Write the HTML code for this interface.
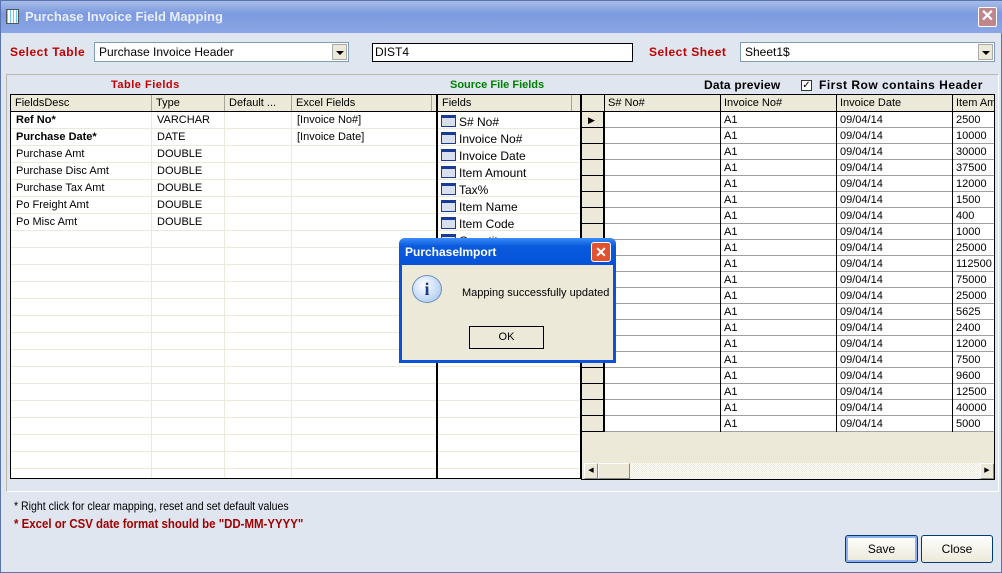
<!DOCTYPE html>
<html><head><meta charset="utf-8">
<style>
*{margin:0;padding:0;box-sizing:border-box}
body{width:1002px;height:573px;overflow:hidden;font-family:"Liberation Sans",Tahoma,sans-serif;font-size:11px;background:#0a246a;position:relative}
.a{position:absolute}
#win{left:0;top:0;width:1002px;height:573px;background:#dfe6ef;border:1px solid #5a74b0}
#tb{left:0;top:0;width:1002px;height:32px;background:linear-gradient(#a7bce6,#7c9ae0 40%,#8aa6e4);}
.lbl{font-weight:bold;font-size:12px;color:#c00000;letter-spacing:.5px}
.combo{background:#fff;border:1px solid #7f9db9;height:20px;font-size:12px;padding:2px 4px;}
.dd{position:absolute;right:1px;top:1px;width:15px;height:16px;background:#ece9d8;border:1px solid #aaa;}
.dd:after{content:"";position:absolute;left:3px;top:6px;border:4px solid transparent;border-top:4px solid #000;border-bottom:0}
.grid{background:#fff;border:1px solid #000;overflow:hidden}
.hdr{background:#ece9d8;height:17px;border-bottom:1px solid #000;position:absolute;left:0;top:0;width:100%}
.hc{position:absolute;top:0;height:16px;border-right:1px solid #a8a597;padding:2px 4px;font-size:11px;white-space:nowrap}
.cell{position:absolute;font-size:11px;white-space:nowrap}
.btn{background:linear-gradient(#fff,#ece9d8);border:1px solid #003c74;border-radius:3px;font-size:12px;text-align:center;line-height:26px}
</style></head><body>
<div id="win" class="a">
<div id="tb" class="a">
 <div class="a" style="left:5px;top:8px;width:13px;height:15px;background:#fff;border:1px solid #555;background-image:repeating-linear-gradient(90deg,#6cf 0 1px,transparent 1px 3px)"></div>
 <div class="a" style="left:24px;top:8px;color:#e9eefa;font-size:13px;font-weight:bold">Purchase Invoice Field Mapping</div>
 <div class="a" style="left:977px;top:6px;width:19px;height:20px;background:#c0868e;border:1px solid #fff;border-radius:2px;color:#fff;font-size:16px;font-weight:bold;text-align:center;line-height:18px">✕</div>
</div>
<div class="a lbl" style="left:9px;top:44px">Select Table</div>
<div class="a combo" style="left:93px;top:41px;width:255px">Purchase Invoice Header<div class="dd"></div></div>
<div class="a combo" style="left:371px;top:42px;width:261px;height:19px;border-color:#000;padding:1px 2px">DIST4</div>
<div class="a lbl" style="left:648px;top:44px">Select Sheet</div>
<div class="a combo" style="left:739px;top:41px;width:255px">Sheet1$<div class="dd"></div></div>

<div class="a" style="left:5px;top:73px;width:993px;height:418px;border:1px solid #b8b8b0;border-right-color:#fff;border-bottom-color:#fff"></div>
<div class="a lbl" style="left:110px;top:78px;font-size:11px">Table Fields</div>
<div class="a" style="left:449px;top:78px;font-size:11px;font-weight:bold;color:#008000">Source File Fields</div>
<div class="a" style="left:703px;top:77px;font-size:12px;font-weight:bold;letter-spacing:.2px">Data preview</div>
<div class="a" style="left:800px;top:79px;width:11px;height:11px;background:#fff;border:1px solid #333;font-size:10px;line-height:9px;text-align:center">✓</div>
<div class="a" style="left:818px;top:77px;font-size:12px;font-weight:bold;letter-spacing:.5px">First Row contains Header</div>

<!-- left grid -->
<div class="a grid" style="left:9px;top:93px;width:427px;height:385px;background:#fff repeating-linear-gradient(#fff 0 16px,#ece9d8 16px 17px);background-position:0 0">
 <div class="a" style="left:140px;top:0;width:1px;height:385px;background:#ece9d8"></div>
 <div class="a" style="left:213px;top:0;width:1px;height:385px;background:#ece9d8"></div>
 <div class="a" style="left:280px;top:0;width:1px;height:385px;background:#ece9d8"></div>
 <div class="hdr"><div class="hc" style="left:0;width:141px">FieldsDesc</div><div class="hc" style="left:141px;width:73px">Type</div><div class="hc" style="left:214px;width:67px">Default ...</div><div class="hc" style="left:281px;width:140px">Excel Fields</div></div>
 <div class="cell" style="left:5px;top:19px;font-weight:bold">Ref No*</div><div class="cell" style="left:146px;top:19px">VARCHAR</div><div class="cell" style="left:286px;top:19px">[Invoice No#]</div>
 <div class="cell" style="left:5px;top:36px;font-weight:bold">Purchase Date*</div><div class="cell" style="left:146px;top:36px">DATE</div><div class="cell" style="left:286px;top:36px">[Invoice Date]</div>
 <div class="cell" style="left:5px;top:53px">Purchase Amt</div><div class="cell" style="left:146px;top:53px">DOUBLE</div>
 <div class="cell" style="left:5px;top:70px">Purchase Disc Amt</div><div class="cell" style="left:146px;top:70px">DOUBLE</div>
 <div class="cell" style="left:5px;top:87px">Purchase Tax Amt</div><div class="cell" style="left:146px;top:87px">DOUBLE</div>
 <div class="cell" style="left:5px;top:104px">Po Freight Amt</div><div class="cell" style="left:146px;top:104px">DOUBLE</div>
 <div class="cell" style="left:5px;top:121px">Po Misc Amt</div><div class="cell" style="left:146px;top:121px">DOUBLE</div>
</div>

<!-- middle grid -->
<div class="a grid" style="left:436px;top:93px;width:144px;height:385px;background:#fff repeating-linear-gradient(#fff 0 16px,#ece9d8 16px 17px)">
 <div class="hdr"><div class="hc" style="left:0;width:134px">Fields</div></div>
 <div id="mf"></div>
</div>

<!-- right grid -->
<div class="a grid" style="left:580px;top:93px;width:414px;height:386px;background:#ece9d8">
 <div class="a" style="left:0;top:0;width:414px;height:17px;background:#ece9d8;border-bottom:1px solid #000"></div>
 <div id="rg"></div>
 <div class="a" style="left:2px;top:368px;width:410px;height:16px;background:repeating-conic-gradient(#fff 0 25%,#ece9d8 0 50%) 0 0/2px 2px">
  <div class="a" style="left:0;top:0;width:14px;height:16px;background:#ece9d8;border:1px solid #fff;border-right-color:#888;border-bottom-color:#888;font-size:7px;text-align:center;line-height:14px">◀</div>
  <div class="a" style="left:14px;top:0;width:32px;height:16px;background:#ece9d8;border:1px solid #fff;border-right-color:#888;border-bottom-color:#888"></div>
  <div class="a" style="left:396px;top:0;width:14px;height:16px;background:#ece9d8;border:1px solid #fff;border-right-color:#888;border-bottom-color:#888;font-size:7px;text-align:center;line-height:14px">▶</div>
 </div>
</div>

<div class="a" style="left:13px;top:498px;font-size:12px;transform:scaleX(.88);transform-origin:left">* Right click for clear mapping, reset and set default values</div>
<div class="a" style="left:13px;top:515px;font-size:13px;font-weight:bold;color:#a00000;transform:scaleX(.88);transform-origin:left">* Excel or CSV date format should be "DD-MM-YYYY"</div>
<div class="a btn" style="left:844px;top:534px;width:73px;height:28px;box-shadow:inset 0 0 0 2px #8cb0f0">Save</div>
<div class="a btn" style="left:920px;top:534px;width:72px;height:28px">Close</div>

<!-- dialog -->
<div class="a" style="left:398px;top:237px;width:217px;height:125px;background:#0a52d8;border-radius:6px 6px 0 0;padding:0 3px 3px 3px">
 <div class="a" style="left:0;top:0;width:217px;height:27px;border-radius:6px 6px 0 0;background:linear-gradient(#3b8cf8,#0a5ade 30%,#0452d8)"></div>
 <div class="a" style="left:6px;top:7px;color:#fff;font-weight:bold;font-size:12px">PurchaseImport</div>
 <div class="a" style="left:192px;top:4px;width:20px;height:20px;background:#e0532e;border:1px solid #fff;border-radius:3px;color:#fff;font-size:14px;font-weight:bold;text-align:center;line-height:18px">✕</div>
 <div class="a" style="left:3px;top:27px;width:211px;height:95px;background:#ece9d8">
  <div class="a" style="left:10px;top:10px;width:30px;height:28px;border-radius:50%;background:radial-gradient(circle at 40% 35%,#fff,#9cc0ec);border:1px solid #6a8fc0;color:#1a3d8a;font-family:'Liberation Serif',serif;font-weight:bold;font-size:18px;text-align:center;line-height:26px">i</div>
  <div class="a" style="left:60px;top:22px;font-size:11px">Mapping successfully updated</div>
  <div class="a" style="left:67px;top:61px;width:75px;height:23px;border:1px solid #000;background:#ece9d8;text-align:center;line-height:21px;font-size:11px">OK</div>
 </div>
</div>
</div>
<script>
var f=["S# No#","Invoice No#","Invoice Date","Item Amount","Tax%","Item Name","Item Code","Quantity"],h="";
f.forEach(function(t,i){var y=18+i*17;h+='<div class="cell" style="left:3px;top:'+(y+2)+'px;width:15px;height:12px;background:#d8e0f0;border:1px solid #1a3a9a;border-top:3px solid #1a3a9a"></div><div class="cell" style="left:21px;top:'+(y+2)+'px;font-size:12px">'+t+'</div>';});
document.getElementById('mf').innerHTML=h;
var v=[2500,10000,30000,37500,12000,1500,400,1000,25000,112500,75000,25000,5625,2400,12000,7500,9600,12500,40000,5000];
var c=[[0,22],[22,116],[138,116],[254,116],[370,60]],n=["","S# No#","Invoice No#","Invoice Date","Item Am"],r="";
for(var k=1;k<5;k++)r+='<div class="cell" style="left:'+c[k][0]+'px;top:0;width:'+c[k][1]+'px;height:17px;border-left:1px solid #000;padding:2px 3px">'+n[k]+'</div>';
v.forEach(function(x,i){var y=17+i*16;
r+='<div class="cell" style="left:0;top:'+y+'px;width:22px;height:16px;background:#ece9d8;box-shadow:inset 0 -1px 0 #000,inset -1px 0 0 #000">'+(i==0?'<span style="font-size:9px;padding-left:6px;line-height:16px">▶</span>':'')+'</div>';
r+='<div class="cell" style="left:22px;top:'+y+'px;width:392px;height:16px;background:#fff;border-bottom:1px solid #a0a0a0"></div>';
var t=["","A1","09/04/14",x];for(var k=1;k<5;k++)r+='<div class="cell" style="left:'+c[k][0]+'px;top:'+y+'px;width:'+c[k][1]+'px;height:16px;border-left:1px solid #000;padding:2px 3px">'+t[k-1]+'</div>';});
document.getElementById('rg').innerHTML=r;
</script>
</body></html>
